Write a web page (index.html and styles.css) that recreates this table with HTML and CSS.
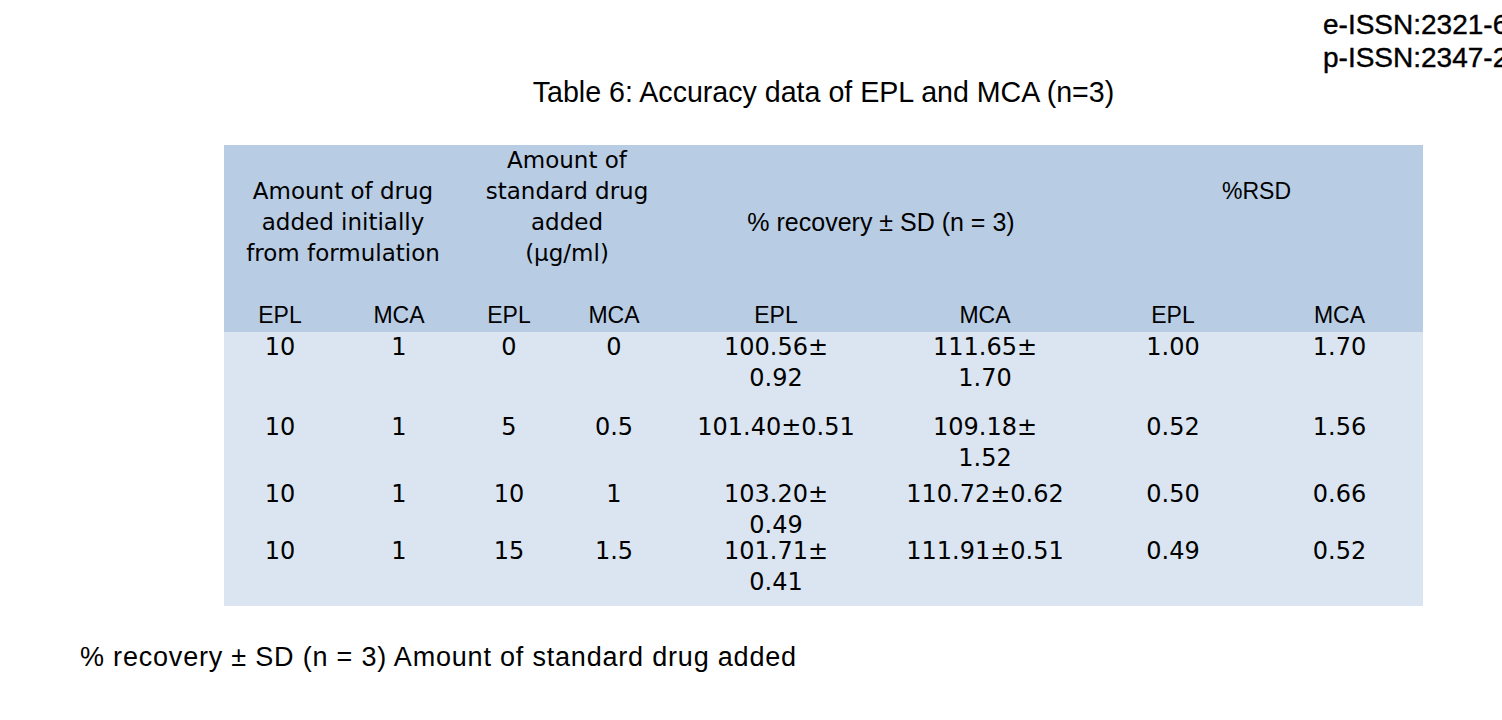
FILE: index.html
```html
<!DOCTYPE html>
<html lang="en">
<head>
<meta charset="utf-8">
<title>Table 6: Accuracy data of EPL and MCA (n=3)</title>
<link rel="stylesheet" href="styles.css">
</head>
<body>
<div class="page">
  <div class="issn">
    <div>e-ISSN:2321-6212</div>
    <div>p-ISSN:2347-2227</div>
  </div>
  <div class="wrap">
    <h1 class="title">Table 6: Accuracy data of EPL and MCA (n=3)</h1>
    <div class="tbl">
      <div class="thead">
        <div class="grp pad1">Amount of drug<br>added initially<br>from formulation</div>
        <div class="grp">Amount of<br>standard drug<br>added<br>(µg/ml)</div>
        <div class="grp pad2 arial big">% recovery ± SD (n = 3)</div>
        <div class="grp pad1 arial">%RSD</div>
        <div class="sub">EPL</div>
        <div class="sub">MCA</div>
        <div class="sub">EPL</div>
        <div class="sub">MCA</div>
        <div class="sub">EPL</div>
        <div class="sub">MCA</div>
        <div class="sub">EPL</div>
        <div class="sub">MCA</div>
      </div>
      <div class="tbody">
        <div class="td">10</div>
        <div class="td">1</div>
        <div class="td">0</div>
        <div class="td">0</div>
        <div class="td">100.56±<br>0.92</div>
        <div class="td">111.65±<br>1.70</div>
        <div class="td">1.00</div>
        <div class="td">1.70</div>

        <div class="td">10</div>
        <div class="td">1</div>
        <div class="td">5</div>
        <div class="td">0.5</div>
        <div class="td">101.40±0.51</div>
        <div class="td">109.18±<br>1.52</div>
        <div class="td">0.52</div>
        <div class="td">1.56</div>

        <div class="td">10</div>
        <div class="td">1</div>
        <div class="td">10</div>
        <div class="td">1</div>
        <div class="td">103.20±<br>0.49</div>
        <div class="td">110.72±0.62</div>
        <div class="td">0.50</div>
        <div class="td">0.66</div>

        <div class="td">10</div>
        <div class="td">1</div>
        <div class="td">15</div>
        <div class="td">1.5</div>
        <div class="td">101.71±<br>0.41</div>
        <div class="td">111.91±0.51</div>
        <div class="td">0.49</div>
        <div class="td">0.52</div>
      </div>
    </div>
  </div>
  <p class="note">% recovery ± SD (n = 3) Amount of standard drug added</p>
</div>
</body>
</html>
```
FILE: styles.css
```css
html, body {
  margin: 0;
  padding: 0;
  background: #ffffff;
  color: #000000;
  overflow: hidden;
}

.page {
  width: 1502px;
  height: 720px;
  overflow: hidden;
}

.issn {
  margin-left: 1323px;
  padding-top: 8px;
  font-family: "Liberation Sans", Arial, sans-serif;
  font-size: 28px;
  font-weight: normal;
  -webkit-text-stroke: 0.4px #000;
  line-height: 33px;
  white-space: nowrap;
}

.wrap {
  margin-left: 224px;
  width: 1199px;
}

.title {
  margin: 1px 0 0;
  font-family: "Liberation Sans", Arial, sans-serif;
  font-size: 28.6px;
  font-weight: normal;
  line-height: 34px;
  text-align: center;
  white-space: nowrap;
}

.tbl {
  margin-top: 36px;
}

.thead,
.tbody {
  display: grid;
  grid-template-columns: 112px 126px 94px 116px 208px 210px 166px 167px;
}

.thead {
  background: #b8cce4;
  grid-template-rows: 155px 32px;
}

.tbody {
  background: #dbe5f1;
  grid-template-rows: 80px 67px 57px 70px;
}

.grp {
  grid-column: span 2;
  text-align: center;
  font-family: "DejaVu Sans", sans-serif;
  font-size: 23px;
  line-height: 31px;
}

.grp.arial {
  font-family: "Liberation Sans", Arial, sans-serif;
  font-size: 23px;
}

.grp.big {
  font-size: 25px;
}

.pad1 {
  padding-top: 31px;
}

.pad2 {
  padding-top: 62px;
}

.sub {
  text-align: center;
  font-family: "Liberation Sans", Arial, sans-serif;
  font-size: 23px;
  line-height: 31px;
}

.td {
  text-align: center;
  font-family: "DejaVu Sans", sans-serif;
  font-size: 24px;
  line-height: 31px;
  white-space: nowrap;
}

.note {
  margin: 34px 0 0 80px;
  font-family: "Liberation Sans", Arial, sans-serif;
  font-size: 27px;
  letter-spacing: 0.8px;
  line-height: 34px;
  white-space: nowrap;
}
```
